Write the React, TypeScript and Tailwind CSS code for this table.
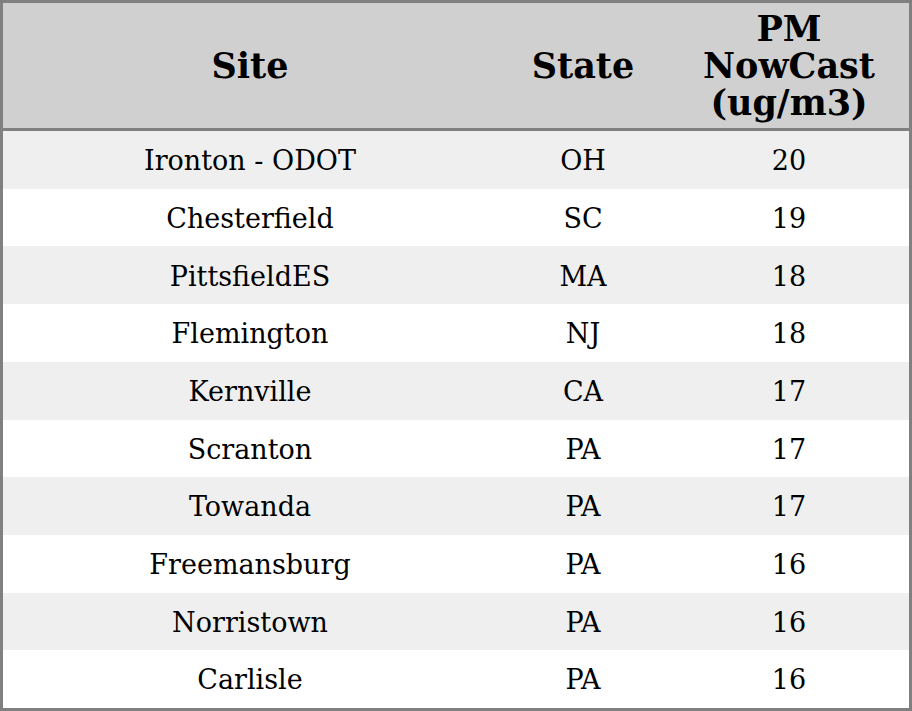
const rows = [
  { site: 'Ironton - ODOT', state: 'OH', pm: 20 },
  { site: 'Chesterfield', state: 'SC', pm: 19 },
  { site: 'PittsfieldES', state: 'MA', pm: 18 },
  { site: 'Flemington', state: 'NJ', pm: 18 },
  { site: 'Kernville', state: 'CA', pm: 17 },
  { site: 'Scranton', state: 'PA', pm: 17 },
  { site: 'Towanda', state: 'PA', pm: 17 },
  { site: 'Freemansburg', state: 'PA', pm: 16 },
  { site: 'Norristown', state: 'PA', pm: 16 },
  { site: 'Carlisle', state: 'PA', pm: 16 },
];

export default function App() {
  return (
    <div className="h-[711px] w-[912px] bg-white font-['DejaVu_Serif',serif] text-black">
      <div className="flex h-full flex-col border-[3px] border-[#808080]">
        {/* Header */}
        <div className="grid h-[128px] grid-cols-[494px_172px_240px] items-center border-b-[3px] border-[#808080] bg-[#d0d0d0] text-center text-[35px] font-bold leading-[37px]">
          <div>Site</div>
          <div>State</div>
          <div>
            PM
            <br />
            NowCast
            <br />
            (ug/m3)
          </div>
        </div>

        {/* Rows */}
        <div className="flex flex-1 flex-col">
          {rows.map((r, i) => (
            <div
              key={i}
              className={
                'grid flex-1 grid-cols-[494px_172px_240px] items-center pt-[3px] text-center text-[27px] ' +
                (i % 2 === 0 ? 'bg-[#efefef]' : 'bg-white')
              }
            >
              <div>{r.site}</div>
              <div>{r.state}</div>
              <div>{r.pm}</div>
            </div>
          ))}
        </div>
      </div>
    </div>
  );
}
